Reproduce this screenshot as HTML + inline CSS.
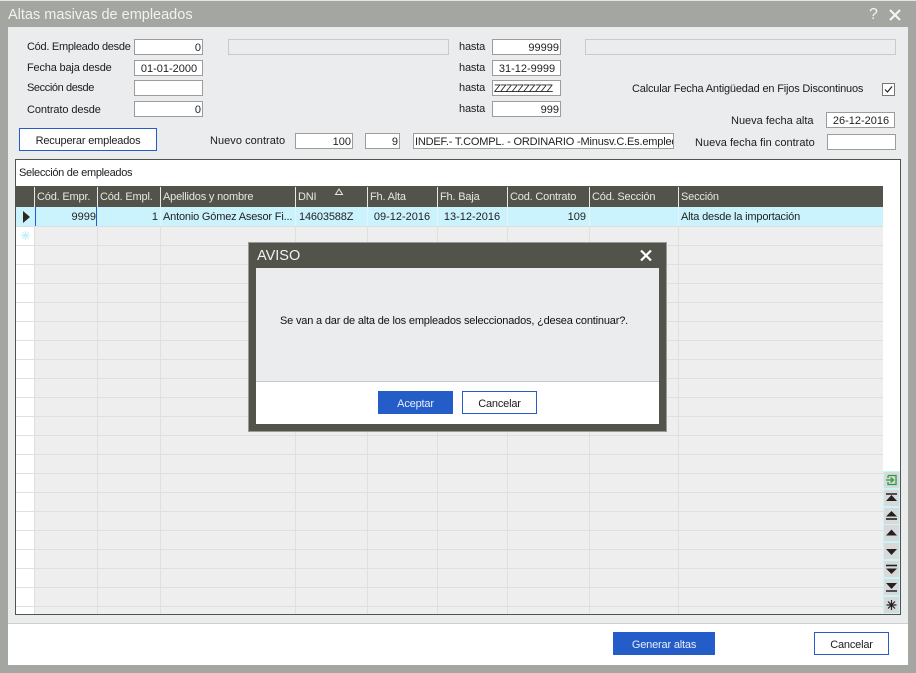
<!DOCTYPE html>
<html><head><meta charset="utf-8"><style>
html,body{margin:0;padding:0}
body{width:916px;height:673px;overflow:hidden;position:relative;background:#a4a6a1;font-family:"Liberation Sans",sans-serif;font-size:11px;letter-spacing:-.18px;color:#1c1c1c}
div{position:absolute;box-sizing:border-box;white-space:nowrap}
.l{height:16px;line-height:16px}
.i{background:#fff;border:1px solid #9c9c9c;height:16px;line-height:16px;padding:0 1px 0 2px;overflow:hidden;color:#222}
.r{text-align:right}.c{text-align:center}
.n{letter-spacing:0}
.d{background:#ebecee;border:1px solid #c9cbcb;height:16px}
.h{top:187px;height:20px;line-height:20px;color:#e8e8e2;background:#52534a;padding-left:2px;border-left:1px solid #e8e8e8}
.v{top:207px;height:407px;width:1px;background:#dfdfdf}
.t{top:208px;height:19px;line-height:19px;padding:0 2px;color:#222}
.b{left:883px;width:17px;height:18px;background:#d9d9d9;border:1px solid #c8f4fc}
.b svg{position:absolute;left:0;top:0}
.bb{background:#245cc8;color:#e8eefa;text-align:center;height:23px;line-height:26px}
.bw{background:#fff;border:1px solid #245cc8;text-align:center;height:23px;line-height:24px}
.tt{font-size:14.5px;letter-spacing:0;height:20px;line-height:20px;color:#f2f2f0}
</style></head><body>
<div style="left:0;top:0;width:916px;height:1px;background:#e4e4e4"></div>
<div style="left:8px;top:27px;width:900px;height:597px;background:#ebecee"></div>
<div style="left:8px;top:623px;width:900px;height:42px;background:#fff;border-top:1px solid #cfcfcf"></div>
<div class="tt" style="left:8px;top:5px">Altas masivas de empleados</div>
<div style="left:869px;top:6px;height:18px;line-height:18px;font-size:16px;letter-spacing:0;color:#f4f4f4">?</div>
<svg style="position:absolute;left:888px;top:8px" width="14" height="14"><path d="M2 2L12 12M12 2L2 12" stroke="#f4f4f4" stroke-width="2.2"/></svg>

<div class="l" style="left:27px;top:39px;letter-spacing:-.28px">Cód. Empleado desde</div>
<div class="l" style="left:27px;top:60px">Fecha baja desde</div>
<div class="l" style="left:27px;top:80px;letter-spacing:-.4px">Sección desde</div>
<div class="l" style="left:27px;top:102px;letter-spacing:-.1px">Contrato desde</div>
<div class="i r n" style="left:134px;top:39px;width:69px">0</div>
<div class="i c n" style="left:134px;top:60px;width:69px">01-01-2000</div>
<div class="i" style="left:134px;top:80px;width:69px"></div>
<div class="i r n" style="left:134px;top:101px;width:69px">0</div>
<div class="d" style="left:228px;top:39px;width:221px"></div>
<div class="l" style="left:459px;top:39px">hasta</div>
<div class="l" style="left:459px;top:60px">hasta</div>
<div class="l" style="left:459px;top:80px">hasta</div>
<div class="l" style="left:459px;top:101px">hasta</div>
<div class="i r n" style="left:492px;top:39px;width:69px">99999</div>
<div class="i c n" style="left:492px;top:60px;width:69px">31-12-9999</div>
<div class="i" style="left:492px;top:80px;width:69px;padding-left:1px;letter-spacing:-.9px">ZZZZZZZZZZ</div>
<div class="i r n" style="left:492px;top:101px;width:69px">999</div>
<div class="d" style="left:585px;top:39px;width:311px"></div>
<div class="l" style="left:632px;top:81px">Calcular Fecha Antigüedad en Fijos Discontinuos</div>
<div style="left:882px;top:83px;width:13px;height:13px;background:#fff;border:1px solid #777"></div>
<svg style="position:absolute;left:882px;top:83px" width="13" height="13"><path d="M3 6.5L5.5 9L10 3.5" fill="none" stroke="#222" stroke-width="1.2"/></svg>
<div class="l" style="left:731px;top:113px;letter-spacing:0">Nueva fecha alta</div>
<div class="i c n" style="left:826px;top:112px;width:69px">26-12-2016</div>
<div class="bw" style="left:19px;top:128px;width:138px">Recuperar empleados</div>
<div class="l" style="left:210px;top:133px;letter-spacing:.04px">Nuevo contrato</div>
<div class="i r n" style="left:295px;top:133px;width:58px">100</div>
<div class="i r n" style="left:365px;top:133px;width:35px">9</div>
<div class="i" style="left:413px;top:133px;width:261px;padding-left:1px">INDEF.- T.COMPL. - ORDINARIO -Minusv.C.Es.empleo</div>
<div class="l" style="left:695px;top:135px;letter-spacing:.02px">Nueva fecha fin contrato</div>
<div class="i" style="left:827px;top:134px;width:69px"></div>

<div style="left:15px;top:159px;width:886px;height:456px;background:#fff;border:1px solid #52534a"></div>
<div class="l" style="left:19px;top:165px;letter-spacing:-.3px">Selección de empleados</div>
<div style="left:16px;top:186px;width:867px;height:21px;background:#52534a"></div>
<div style="left:35px;top:226px;width:848px;height:388px;background:#eeeeee"></div>
<div style="left:16px;top:226px;width:867px;height:388px;background:repeating-linear-gradient(to bottom,#dfdfdf 0,#dfdfdf 1px,transparent 1px,transparent 19px)"></div>
<div class="v" style="left:34px"></div>
<div class="v" style="left:97px"></div>
<div class="v" style="left:160px"></div>
<div class="v" style="left:295px"></div>
<div class="v" style="left:367px"></div>
<div class="v" style="left:437px"></div>
<div class="v" style="left:507px"></div>
<div class="v" style="left:589px"></div>
<div class="v" style="left:678px"></div>

<div class="h" style="left:34px;width:63px">Cód. Empr.</div>
<div class="h" style="left:97px;width:63px">Cód. Empl.</div>
<div class="h" style="left:160px;width:135px">Apellidos y nombre</div>
<div class="h" style="left:295px;width:72px">DNI</div>
<svg style="position:absolute;left:334px;top:188px" width="10" height="8"><path d="M5 1L8.5 6.5H1.5Z" fill="none" stroke="#e8e8e2"/></svg>
<div class="h" style="left:367px;width:70px">Fh. Alta</div>
<div class="h" style="left:437px;width:70px">Fh. Baja</div>
<div class="h" style="left:507px;width:82px">Cod. Contrato</div>
<div class="h" style="left:589px;width:89px">Cód. Sección</div>
<div class="h" style="left:678px;width:205px">Sección</div>

<div style="left:16px;top:207px;width:18px;height:19px;background:#cbf3fd"></div>
<div style="left:34px;top:207px;width:849px;height:19px;background:#cbf3fd"></div>
<svg style="position:absolute;left:22px;top:211px" width="9" height="12"><path d="M1 0L8 6L1 12Z" fill="#2a2a22"/></svg>
<div style="left:35px;top:207px;width:1px;height:19px;background:#245cc8"></div>
<div style="left:96px;top:207px;width:1px;height:19px;background:#245cc8"></div>
<div class="v" style="left:160px;height:19px;background:#e4f4f8"></div>
<div class="v" style="left:295px;height:19px;background:#e4f4f8"></div>
<div class="v" style="left:367px;height:19px;background:#e4f4f8"></div>
<div class="v" style="left:437px;height:19px;background:#e4f4f8"></div>
<div class="v" style="left:507px;height:19px;background:#e4f4f8"></div>
<div class="v" style="left:589px;height:19px;background:#e4f4f8"></div>
<div class="v" style="left:678px;height:19px;background:#e4f4f8"></div>
<div class="t r n" style="left:36px;width:60px;padding:0">9999</div>
<div class="t r n" style="left:97px;width:63px">1</div>
<div class="t" style="left:161px;width:134px">Antonio Gómez Asesor Fi...</div>
<div class="t n" style="left:297px;width:70px;letter-spacing:-.15px">14603588Z</div>
<div class="t c n" style="left:367px;width:70px">09-12-2016</div>
<div class="t c n" style="left:437px;width:70px">13-12-2016</div>
<div class="t r n" style="left:507px;width:82px;padding-right:3px">109</div>
<div class="t" style="left:679px;width:200px">Alta desde la importación</div>
<svg style="position:absolute;left:20px;top:230px" width="11" height="11"><path d="M5.5 1V10M1 5.5H10M2.3 2.3L8.7 8.7M8.7 2.3L2.3 8.7" stroke="#c8f0fb" stroke-width="1.2"/></svg>

<div class="b" style="top:471px"><svg width="15" height="16"><path d="M4 3.5H12V12.5H4V10M4 6V3.5M2 8H8.5M6.5 5.5L9.5 8L6.5 10.5" fill="none" stroke="#2a9a3c" stroke-width="1.3"/></svg></div>
<div class="b" style="top:489px"><svg width="15" height="16"><path d="M2 4H13" stroke="#222" stroke-width="1.5"/><path d="M7.5 5L13 11H2Z" fill="#222"/></svg></div>
<div class="b" style="top:507px"><svg width="15" height="16"><path d="M7.5 3L13 8.5H2Z" fill="#222"/><path d="M2 11H13" stroke="#222" stroke-width="1.6"/></svg></div>
<div class="b" style="top:524px"><svg width="15" height="16"><path d="M7.5 4.5L13 10.5H2Z" fill="#222"/></svg></div>
<div class="b" style="top:542px"><svg width="15" height="16"><path d="M2 6H13L7.5 12Z" fill="#222"/></svg></div>
<div class="b" style="top:560px"><svg width="15" height="16"><path d="M2 4.5H13" stroke="#222" stroke-width="1.6"/><path d="M2 7.5H13L7.5 13Z" fill="#222"/></svg></div>
<div class="b" style="top:578px"><svg width="15" height="16"><path d="M2 4H13L7.5 10Z" fill="#222"/><path d="M2 12H13" stroke="#222" stroke-width="1.5"/></svg></div>
<div class="b" style="top:596px;height:18px"><svg width="15" height="16"><path d="M7.5 3V13M2.5 8H12.5M4 4.5L11 11.5M11 4.5L4 11.5" stroke="#222" stroke-width="1.2"/></svg></div>

<div style="left:248px;top:242px;width:419px;height:190px;background:#52534a;border:1px solid #9a9b96"></div>
<div style="left:256px;top:268px;width:403px;height:156px;background:#fff"></div>
<div style="left:256px;top:268px;width:403px;height:114px;background:#ebecee;border-bottom:1px solid #c9c9c9"></div>
<div class="tt" style="left:257px;top:246px">AVISO</div>
<svg style="position:absolute;left:640px;top:250px" width="12" height="11"><path d="M1 0.5L11 10.5M11 0.5L1 10.5" stroke="#fff" stroke-width="2.2"/></svg>
<div class="l" style="left:280px;top:313px;color:#111">Se van a dar de alta de los empleados seleccionados, ¿desea continuar?.</div>
<div class="bb" style="left:378px;top:391px;width:75px">Aceptar</div>
<div class="bw" style="left:462px;top:391px;width:75px">Cancelar</div>

<div class="bb" style="left:613px;top:632px;width:102px">Generar altas</div>
<div class="bw" style="left:814px;top:632px;width:75px">Cancelar</div>
</body></html>
